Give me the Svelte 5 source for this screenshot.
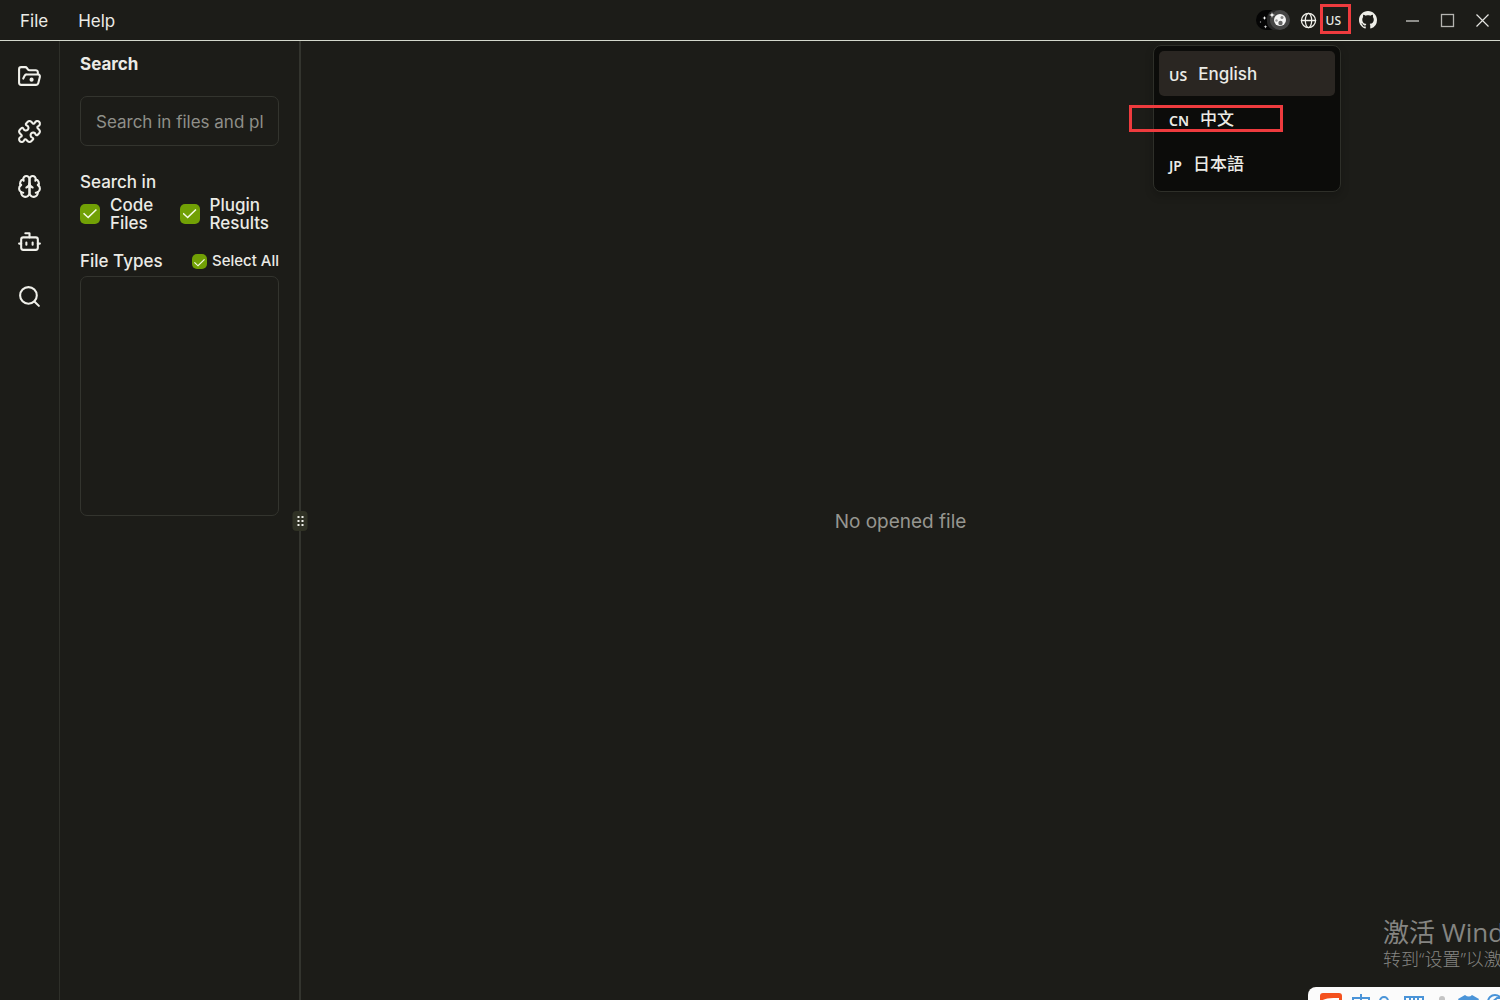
<script>
  let languages = [
    { code: 'US', name: 'English' },
    { code: 'CN', name: '中文' },
    { code: 'JP', name: '日本語' }
  ];

  let current = $state('US');
  let searchText = $state('');
  let codeFiles = $state(true);
  let pluginResults = $state(true);
  let selectAll = $state(true);
</script>

<div class="app">
  <header class="topbar">
    <nav class="menus">
      <button>File</button>
      <button>Help</button>
    </nav>

    <div class="tools">
      <button class="theme" aria-label="Toggle theme">
        <svg width="36" height="22" viewBox="0 0 36 22">
          <rect x="1" y="1" width="34" height="20" rx="10" fill="#050505" />
          <path d="M18 1h7a10 10 0 0 1 0 20h-7a10 10 0 0 1-6-10 10 10 0 0 1 6-10z" fill="#262626" />
          <rect x="15" y="1" width="20" height="20" rx="10" fill="#464646" />
          <path d="M17 3l.7 2.300 2.300.7-2.300.7-.7 2.300-.7-2.300-2.300-.7 2.300-.7z" fill="#fff" />
          <path d="M9.500 7l.6 1.400 1.400.6-1.400.6-.6 1.400-.6-1.400-1.400-.6 1.400-.6z" fill="#fff" />
          <path d="M10.500 16l.5 1.300 1.300.5-1.300.5-.5 1.300-.5-1.300-1.300-.5 1.300-.5z" fill="#ddd" />
          <circle cx="5.500" cy="13" r=".7" fill="#999" />
          <circle cx="25" cy="11" r="6" fill="#f5f5f5" />
          <circle cx="27" cy="8.500" r="1.500" fill="#888" />
          <circle cx="25.500" cy="14" r="2.200" fill="#666" />
          <circle cx="21.500" cy="11.500" r="1.200" fill="#999" />
        </svg>
      </button>

      <button class="lang" aria-label="Change language">
        <svg class="line thin" width="17" height="17" viewBox="0 0 24 24">
          <circle cx="12" cy="12" r="10" />
          <ellipse cx="12" cy="12" rx="4.500" ry="10" />
          <path d="M2 12h20" />
        </svg>
        <span class="code">{current}</span>
        <span class="mark trigger-mark"></span>
      </button>

      <a class="github" href="#github" aria-label="GitHub">
        <svg width="18" height="18" viewBox="0 0 16 16" fill="#eeeee8">
          <path d="M8 0C3.580 0 0 3.580 0 8c0 3.540 2.290 6.530 5.470 7.590.4.070.55-.17.55-.38 0-.19-.01-.82-.01-1.490-2.010.37-2.530-.49-2.690-.94-.09-.23-.48-.94-.82-1.130-.28-.15-.68-.52-.01-.53.63-.01 1.080.58 1.230.82.72 1.210 1.870.87 2.330.66.07-.52.28-.87.51-1.070-1.780-.2-3.640-.89-3.640-3.950 0-.87.31-1.590.82-2.150-.08-.2-.36-1.020.08-2.120 0 0 .67-.21 2.200.82.64-.18 1.320-.27 2-.27s1.360.09 2 .27c1.530-1.040 2.200-.82 2.200-.82.44 1.100.16 1.920.08 2.120.51.56.82 1.270.82 2.150 0 3.070-1.870 3.750-3.650 3.950.29.25.54.73.54 1.480 0 1.070-.01 1.930-.01 2.200 0 .21.15.46.55.38A8.010 8.010 0 0 0 16 8c0-4.420-3.580-8-8-8z" />
        </svg>
      </a>

      <div class="window-controls">
        <button aria-label="Minimize">
          <svg width="15" height="15" viewBox="0 0 15 15"><path d="M1 8h13" stroke="#b4b4b0" stroke-width="1.500" /></svg>
        </button>
        <button aria-label="Maximize">
          <svg width="15" height="15" viewBox="0 0 15 15"><rect x="1.500" y="1.500" width="12" height="12" fill="none" stroke="#b4b4b0" stroke-width="1.300" /></svg>
        </button>
        <button aria-label="Close">
          <svg width="15" height="15" viewBox="0 0 15 15"><path d="M1.500 1.500l12 12M13.500 1.500l-12 12" stroke="#e4e4e0" stroke-width="1.200" /></svg>
        </button>
      </div>
    </div>

    <div class="lang-menu">
      {#each languages as lang}
        <button class:active={lang.code === current} onclick={() => (current = lang.code)}>
          <span class="code">{lang.code}</span>
          <span class="name">{lang.name}</span>
        </button>
      {/each}
      <span class="mark option-mark"></span>
    </div>
  </header>

  <div class="body">
    <nav class="rail">
      <button aria-label="Explorer">
        <svg class="line" viewBox="0 0 24 24">
          <path d="m6 14 1.450-2.900A2 2 0 0 1 9.240 10H20a2 2 0 0 1 1.940 2.500l-1.550 6a2 2 0 0 1-1.940 1.500H4a2 2 0 0 1-2-2V5c0-1.100.9-2 2-2h3.930a2 2 0 0 1 1.660.9l.82 1.200a2 2 0 0 0 1.660.9H18a2 2 0 0 1 2 2v2" />
          <circle cx="14" cy="15" r="1" />
        </svg>
      </button>
      <button aria-label="Plugins">
        <svg class="line" viewBox="0 0 24 24">
          <path d="M19.439 7.850c-.049.322.059.648.289.878l1.568 1.568c.47.47.706 1.087.706 1.704s-.235 1.233-.706 1.704l-1.611 1.611a.98.98 0 0 1-.837.276c-.47-.07-.802-.48-.968-.925a2.501 2.501 0 1 0-3.214 3.214c.446.166.855.497.925.968a.979.979 0 0 1-.276.837l-1.610 1.610a2.404 2.404 0 0 1-1.705.707 2.402 2.402 0 0 1-1.704-.706l-1.568-1.568a1.026 1.026 0 0 0-.877-.29c-.493.074-.84.504-1.020.968a2.500 2.500 0 1 1-3.237-3.237c.464-.18.894-.527.967-1.020a1.026 1.026 0 0 0-.289-.877l-1.568-1.568A2.402 2.402 0 0 1 1.998 12c0-.617.236-1.234.706-1.704L4.230 8.770c.24-.24.581-.353.917-.303.515.077.877.528 1.073 1.010a2.500 2.500 0 1 0 3.259-3.259c-.482-.196-.933-.558-1.010-1.073-.05-.336.062-.676.303-.917l1.525-1.525A2.402 2.402 0 0 1 12 1.998c.617 0 1.234.236 1.704.706l1.568 1.568c.23.23.556.338.877.29.493-.074.84-.504 1.020-.968a2.500 2.500 0 1 1 3.237 3.237c-.464.18-.894.527-.967 1.020Z" />
        </svg>
      </button>
      <button aria-label="Models">
        <svg class="line" viewBox="0 0 24 24">
          <path d="M12 5a3 3 0 1 0-5.997.125 4 4 0 0 0-2.526 5.770 4 4 0 0 0 .556 6.588A4 4 0 1 0 12 18Z" />
          <path d="M12 5a3 3 0 1 1 5.997.125 4 4 0 0 1 2.526 5.770 4 4 0 0 1-.556 6.588A4 4 0 1 1 12 18Z" />
          <path d="M15 13a4.500 4.500 0 0 1-3-4 4.500 4.500 0 0 1-3 4" />
          <path d="M17.599 6.500a3 3 0 0 0 .399-1.375M6.003 5.125A3 3 0 0 0 6.401 6.500M3.477 10.896a4 4 0 0 1 .585-.396M19.938 10.500a4 4 0 0 1 .585.396M6 18a4 4 0 0 1-1.967-.516M19.967 17.484A4 4 0 0 1 18 18" />
        </svg>
      </button>
      <button aria-label="Assistant">
        <svg class="line" viewBox="0 0 24 24">
          <path d="M12 8V4H8" />
          <rect x="4" y="8" width="16" height="12" rx="2" />
          <path d="M2 14h2M20 14h2M15 13v2M9 13v2" />
        </svg>
      </button>
      <button aria-label="Search">
        <svg class="line" viewBox="0 0 24 24">
          <circle cx="11" cy="11" r="8" />
          <path d="m21 21-4.300-4.300" />
        </svg>
      </button>
    </nav>

    <aside class="panel">
      <h2>Search</h2>
      <input class="query" type="text" aria-label="Search" placeholder="Search in files and plugins" bind:value={searchText} />

      <h3>Search in</h3>
      <div class="scopes">
        <label><input type="checkbox" bind:checked={codeFiles} /><span>Code Files</span></label>
        <label><input type="checkbox" bind:checked={pluginResults} /><span>Plugin Results</span></label>
      </div>

      <div class="types-head">
        <h3>File Types</h3>
        <label class="small"><input type="checkbox" bind:checked={selectAll} /><span>Select All</span></label>
      </div>
      <div class="types"></div>
    </aside>

    <div class="divider">
      <div class="grip">
        <svg width="8" height="12" viewBox="0 0 8 12" fill="#f0f0ea">
          <rect x="1" y="1" width="2" height="2" /><rect x="5" y="1" width="2" height="2" />
          <rect x="1" y="5" width="2" height="2" /><rect x="5" y="5" width="2" height="2" />
          <rect x="1" y="9" width="2" height="2" /><rect x="5" y="9" width="2" height="2" />
        </svg>
      </div>
    </div>

    <main class="editor">No opened file</main>
  </div>

  <div class="watermark">
    <div class="title">激活 Windows</div>
    <div class="hint">转到“设置”以激活 Windows。</div>
  </div>

  <!-- input method bar, mostly below the window edge -->
  <div class="ime">
    <svg width="192" height="40" viewBox="0 0 192 40" fill="none" stroke="#4a94d8" stroke-width="2">
      <rect x="12" y="6" width="22" height="22" rx="3" fill="#f4511e" stroke="none" />
      <path d="M15 14c5-3 10-2 16-2" stroke="#fff" />
      <path d="M53 7v22M45 11h16v9H45z" />
      <circle cx="76" cy="14" r="4" />
      <rect x="97" y="10" width="18" height="14" />
      <path d="M102 10v6M106 10v6M110 10v6" />
      <circle cx="134" cy="12" r="3" fill="#c4c4c4" stroke="none" />
      <path d="M150 12l7-4q4 3 7 0l7 4-3 6h-3v10h-9V18h-3z" fill="#4a94d8" stroke="none" />
      <circle cx="187" cy="15" r="7" />
      <path d="M183 16l6-5h6" />
    </svg>
  </div>
</div>

<style>
  :global(body) {
    background: #1c1c18;
  }

  * {
    box-sizing: border-box;
  }

  .app {
    position: relative;
    display: flex;
    flex-direction: column;
    height: 100vh;
    overflow: hidden;
    background: #1c1c18;
    color: #ebebe6;
    font-family: Inter, "Noto Sans CJK SC", sans-serif;
    font-size: 17px;
    line-height: 18px;
  }

  button {
    border: 0;
    padding: 0;
    background: none;
    color: inherit;
    font: inherit;
    cursor: pointer;
  }

  svg {
    display: block;
  }

  .line {
    fill: none;
    stroke: #f0f0ea;
    stroke-width: 2;
    stroke-linecap: round;
    stroke-linejoin: round;
  }

  .thin {
    stroke-width: 1.8;
  }

  .topbar {
    position: relative;
    display: flex;
    justify-content: space-between;
    align-items: center;
    height: 41px;
    flex: none;
    border-bottom: 1px solid #d4d8cc;
  }

  .menus {
    display: flex;
    gap: 30px;
    padding: 2px 0 0 20px;
  }

  .tools {
    display: flex;
    align-items: center;
  }

  .code {
    font-family: "Noto Sans", sans-serif;
    font-weight: 600;
  }

  .lang {
    position: relative;
    display: flex;
    align-items: center;
    gap: 9px;
    margin-left: 9px;
    font-size: 12px;
  }

  .lang .code {
    padding-top: 2px;
    font-weight: 500;
  }

  .github {
    margin-left: 18px;
  }

  .window-controls {
    display: flex;
    gap: 20px;
    padding: 0 10px 0 28px;
  }

  /* red highlight frames */
  .mark {
    position: absolute;
    border: 3px solid #ee3b3e;
    pointer-events: none;
  }

  .trigger-mark {
    right: -10px;
    top: -6px;
    width: 31px;
    height: 30px;
  }

  .option-mark {
    left: -25px;
    top: 59px;
    width: 154px;
    height: 27px;
  }

  .lang-menu {
    position: absolute;
    z-index: 5;
    top: 45px;
    right: 159px;
    display: flex;
    flex-direction: column;
    width: 188px;
    padding: 5px;
    border: 1px solid #2e2f29;
    border-radius: 8px;
    background: #0c0c0a;
    box-shadow: 0 4px 8px rgba(0, 0, 0, 0.2);
  }

  .lang-menu button {
    display: flex;
    align-items: center;
    gap: 11px;
    height: 45px;
    padding: 0 10px;
    border-radius: 5px;
  }

  .lang-menu .active {
    background: #2a2622;
  }

  .lang-menu .code {
    font-size: 14px;
    padding-top: 4px;
  }

  .lang-menu .name {
    font-weight: 500;
  }

  .body {
    display: flex;
    flex: 1;
    min-height: 0;
  }

  .rail {
    display: flex;
    flex-direction: column;
    width: 60px;
    padding-top: 8px;
    border-right: 1px solid #2e2f29;
  }

  .rail button {
    display: flex;
    align-items: center;
    justify-content: center;
    height: 55px;
  }

  .rail svg {
    width: 25px;
    height: 25px;
  }

  .panel {
    display: flex;
    flex-direction: column;
    width: 239px;
    padding: 14px 20px;
  }

  h2,
  h3 {
    margin: 0;
    font-size: 17px;
    line-height: 18px;
    font-weight: 500;
  }

  h2 {
    font-weight: 700;
  }

  .query {
    width: 100%;
    height: 50px;
    margin: 23px 0 27px;
    padding: 2px 15px 0;
    border: 1px solid #33342e;
    border-radius: 7px;
    background: transparent;
    color: inherit;
    font: inherit;
  }

  .query::placeholder {
    color: #8f8f89;
    opacity: 1;
  }

  .scopes {
    display: grid;
    grid-template-columns: 1fr 1fr;
    padding: 5px 0 20px;
    font-weight: 500;
  }

  label {
    display: flex;
    align-items: center;
    gap: 10px;
  }

  input[type='checkbox'] {
    appearance: none;
    display: grid;
    place-items: center;
    flex: none;
    width: 20px;
    height: 20px;
    margin: 0;
    border-radius: 5px;
    background: #33342e;
  }

  input[type='checkbox']:checked {
    background: #71a005;
  }

  input[type='checkbox']:checked::before {
    content: '';
    width: 14px;
    height: 10px;
    background: #f4fbe4;
    clip-path: polygon(0 48%, 8% 38%, 36% 76%, 92% 0, 100% 10%, 37% 95%);
  }

  .types-head {
    display: flex;
    justify-content: space-between;
    align-items: center;
    padding-bottom: 6px;
  }

  .small {
    gap: 5px;
    font-size: 15px;
    font-weight: 500;
  }

  .small input[type='checkbox'] {
    width: 15px;
    height: 15px;
    padding-top: 4px;
  }

  .small input[type='checkbox']:checked::before {
    width: 11px;
    height: 8px;
  }

  .types {
    height: 240px;
    border: 1px solid #33342e;
    border-radius: 7px;
  }

  .divider {
    position: relative;
    width: 2px;
    background: #33342e;
  }

  .grip {
    position: absolute;
    top: 50%;
    left: 50%;
    display: grid;
    place-items: center;
    width: 15px;
    height: 20px;
    border-radius: 4px;
    background: #303225;
    transform: translate(-50%, -50%);
  }

  .editor {
    display: flex;
    flex: 1;
    align-items: center;
    justify-content: center;
    padding-top: 2px;
    color: #969690;
    font-size: 19px;
  }

  .watermark {
    position: absolute;
    right: 0;
    bottom: 29px;
    width: 117px;
    overflow: hidden;
    color: #858582;
    font-family: "Open Sans", "Noto Sans CJK SC", sans-serif;
    font-weight: 400;
    white-space: nowrap;
    pointer-events: none;
  }

  .title {
    font-size: 26px;
    line-height: 30px;
  }

  .hint {
    font-size: 18px;
    font-weight: 300;
    line-height: 24px;
  }

  .ime {
    position: absolute;
    right: 0;
    bottom: -27px;
    border-radius: 8px 0 0 8px;
    background: #fbfbfb;
  }
</style>
